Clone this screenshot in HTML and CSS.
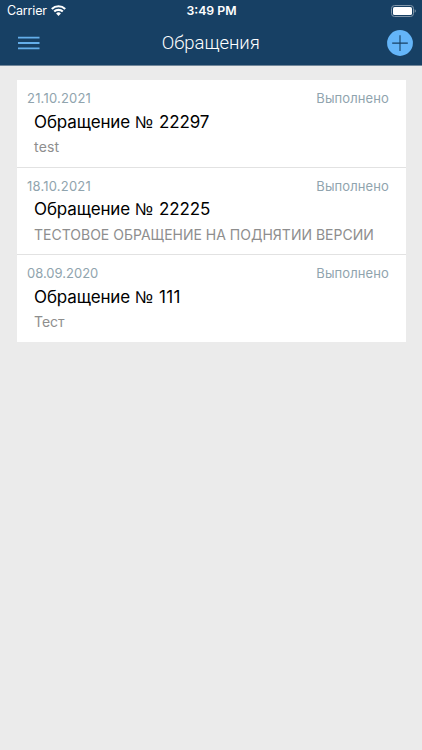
FILE: index.html
```
<!DOCTYPE html>
<html lang="ru">
<head>
<meta charset="utf-8">
<title>Обращения</title>
<link rel="stylesheet" href="styles.css">
</head>
<body>
<header class="header">
  <div class="status">
    <div class="carrier"><span class="carrier-name">Carrier</span>
      <svg class="wifi" width="15" height="11" viewBox="0 0 15 11"><g fill="none" stroke="#fff" stroke-width="2.100"><path d="M.8 4a9.600 9.600 0 0 1 13.400 0"/><path d="M3.200 6.600a6.100 6.100 0 0 1 8.600 0"/></g><path d="M5.100 8.400a3.500 3.500 0 0 1 4.800 0L7.500 10.900z" fill="#fff"/></svg>
    </div>
    <span class="time">3:49 PM</span>
    <svg class="battery" width="25" height="12" viewBox="0 0 25 12"><rect x=".5" y=".5" width="22" height="11" rx="3" fill="none" stroke="#8297aa"/><rect x="2" y="2" width="19" height="8" rx="1.600" fill="#fff"/><path d="M23.700 4.200v3.600c1.500-.7 1.500-2.900 0-3.600z" fill="#8297aa"/></svg>
  </div>
  <nav class="nav">
    <svg class="menu" width="22" height="14" viewBox="0 0 22 14"><path d="M0 1.600h21.500M0 7h21.500M0 12.400h21.500" stroke="#64aeea" stroke-width="1.900"/></svg>
    <h1 class="title">Обращения</h1>
    <svg class="add" width="26" height="26" viewBox="0 0 26 26"><circle cx="13" cy="13" r="12.900" fill="#64b5f9"/><path d="M5.200 13.100h15.600M13 5.300v15.600" stroke="#174064" stroke-width="1.100"/></svg>
  </nav>
</header>
<main class="list">
  <article class="item"><div class="meta"><span class="date date-wide">21.10.2021</span><span class="state">Выполнено</span></div><h2 class="name">Обращение <span class="sign">№</span> 22297</h2><p class="text text-wide">test</p></article>
  <article class="item"><div class="meta"><span class="date date-wide">18.10.2021</span><span class="state">Выполнено</span></div><h2 class="name">Обращение <span class="sign">№</span> 22225</h2><p class="text">ТЕСТОВОЕ ОБРАЩЕНИЕ НА ПОДНЯТИИ ВЕРСИИ</p></article>
  <article class="item"><div class="meta"><span class="date">08.09.2020</span><span class="state">Выполнено</span></div><h2 class="name">Обращение <span class="sign">№</span> <span class="ones">111</span></h2><p class="text">Тест</p></article>
</main>
</body>
</html>
```
FILE: styles.css
```
* { box-sizing: border-box; margin: 0; padding: 0; }
body { height: 750px; background: #ebebeb; font-family: Inter, "Liberation Sans", sans-serif; overflow: hidden; }
svg { display: block; }
.header { height: 66px; background: #174064; border-bottom: 1px solid #72879a; color: #fff; }
.status { display: grid; grid-template-columns: 1fr auto 1fr; height: 21px; align-items: center; padding: 0 6px 0 7px; }
.carrier { display: flex; align-items: center; gap: 4.500px; font-size: 12.500px; letter-spacing: -.15px; }
.time { font-size: 12.300px; font-weight: 600; }
.battery { justify-self: end; }
.nav { display: grid; grid-template-columns: 1fr auto 1fr; align-items: center; height: 44px; padding: 0 9.500px 0 18px; }
.title { font-family: Roboto, Inter, sans-serif; font-size: 18.500px; font-weight: 300; line-height: 24px; margin-left: -9px; }
.add { justify-self: end; }
.list { margin: 14px 16.500px 0; background: #fff; }
.item { height: 87.500px; padding: 9px 16.500px 0 10.500px; border-bottom: 1px solid #e2e2e2; }
.item:last-child { height: 86.500px; border: 0; }
.meta { display: flex; justify-content: space-between; font-size: 13px; line-height: 18px; color: #90a4ae; }
.date-wide { letter-spacing: .2px; }
.state { letter-spacing: .1px; }
.name { margin: 2.500px 0 0 7px; font-size: 17px; font-weight: 400; line-height: 24px; letter-spacing: -.12px; color: #000; }
.sign { display: inline-block; width: 19.500px; font-family: "Liberation Sans", sans-serif; line-height: 20px; letter-spacing: 0; }
.ones { letter-spacing: .4px; }
.text { margin: 4.500px 0 0 7px; font-size: 14px; line-height: 18px; color: #8e8e8e; white-space: nowrap; }
.text-wide { letter-spacing: .2px; }
```
